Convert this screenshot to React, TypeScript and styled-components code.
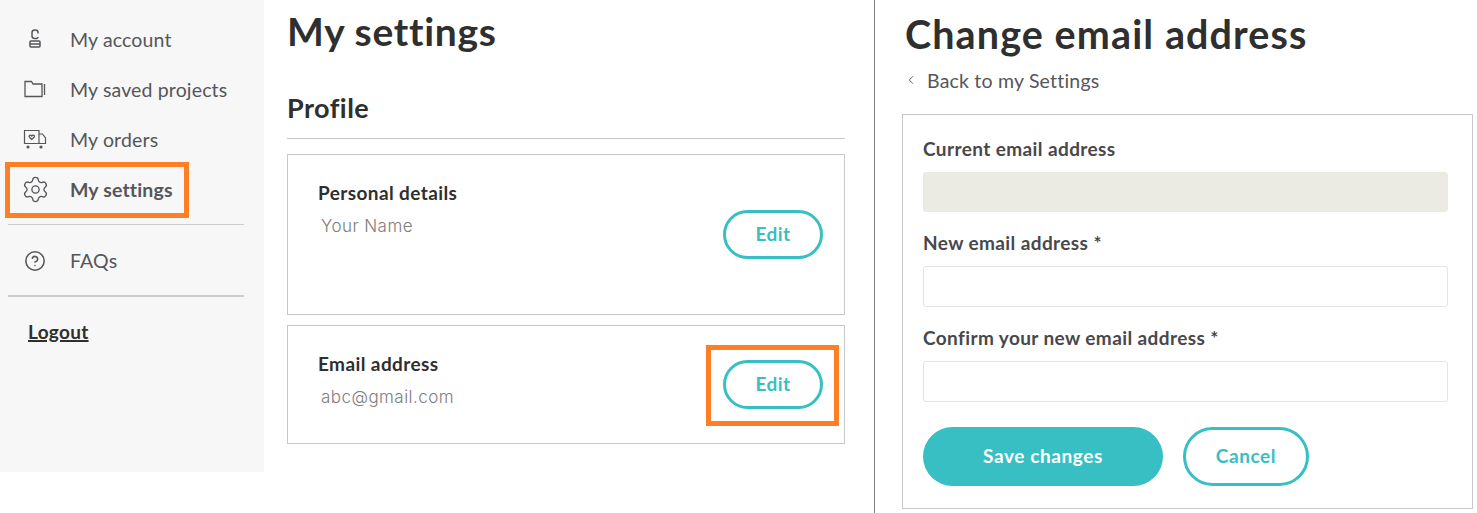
import React from "react";
import styled, { createGlobalStyle } from "styled-components";
import { ChevronLeft, Settings, CircleHelp } from "lucide-react";

const GlobalStyle = createGlobalStyle`
    html, body {
        margin: 0;
        padding: 0;
        background: #fff;
    }
    body {
        font-family: "Lato", "Open Sans", sans-serif;
        color: #2f2f2f;
    }
`;

const Page = styled.div`
    width: 1477px;
    height: 513px;
    display: flex;
    overflow: hidden;
`;

const Sidebar = styled.nav`
    width: 264px;
    height: 472px;
    flex: none;
    background: #f7f7f7;
    padding: 14px 20px 0 8px;
    box-sizing: border-box;
`;

const NavRow = styled.div<{ $bold?: boolean }>`
    height: 50px;
    display: flex;
    align-items: center;
    position: relative;
    color: #55565a;
    font-size: 19.5px;
    letter-spacing: 0.15px;
    font-weight: ${(p) => (p.$bold ? 700 : 400)};
`;

const NavIcon = styled.span`
    width: 62px;
    flex: none;
    display: flex;
    justify-content: center;
    padding-right: 8px;
    box-sizing: border-box;
    color: #55565a;
`;

const SideRule = styled.div<{ $thick?: boolean; $gap?: number }>`
    height: ${(p) => (p.$thick ? 2 : 1)}px;
    margin-top: ${(p) => p.$gap || 0}px;
    background: #cccccc;
`;

const FaqRow = styled(NavRow)`
    height: 70px;
    padding-top: 1px;
    box-sizing: border-box;
`;

const Logout = styled.a`
    display: block;
    margin: 23px 0 0 20px;
    font-size: 19px;
    letter-spacing: 0.3px;
    font-weight: 700;
    color: #2f2f2f;
    text-decoration: underline;
    text-decoration-thickness: 2px;
    line-height: 24px;
`;

const Callout = styled.div`
    position: absolute;
    border: 5px solid #ff7f27;
    box-sizing: border-box;
    pointer-events: none;
`;

const SettingsCallout = styled(Callout)`
    left: -3px;
    top: -2px;
    width: 184px;
    height: 56px;
`;

const EditCallout = styled(Callout)`
    right: 5px;
    top: 19px;
    width: 133px;
    height: 81px;
`;

const Main = styled.main`
    width: 558px;
    margin-left: 23px;
    flex: none;
`;

const Title = styled.h1`
    margin: 0;
    font-size: 39px;
    font-weight: 700;
    letter-spacing: 0.7px;
    line-height: 46px;
    padding-top: 8px;
    color: #2f2f2f;
`;

const SectionTitle = styled.h2`
    margin: 36px 0 0;
    padding-bottom: 13px;
    font-size: 27px;
    letter-spacing: 0.45px;
    font-weight: 700;
    line-height: 35px;
    border-bottom: 1px solid #c8c8c8;
    color: #2f2f2f;
`;

const Card = styled.section<{ $height: number; $top: number }>`
    position: relative;
    height: ${(p) => p.$height}px;
    margin-top: ${(p) => p.$top}px;
    border: 1px solid #c8c8c8;
    box-sizing: border-box;
    padding: 26px 21px 0 30px;
    display: flex;
    justify-content: space-between;
`;

const CardTitle = styled.div`
    font-size: 19px;
    letter-spacing: 0.4px;
    font-weight: 700;
    line-height: 24px;
    color: #2f2f2f;
`;

const CardValue = styled.div`
    margin: 10px 0 0 3px;
    font-family: "Inter", sans-serif;
    font-weight: 300;
    font-size: 17px;
    letter-spacing: 0.45px;
    line-height: 22px;
    color: #7d7d7d;
`;

const EditButton = styled.button<{ $offset: number }>`
    width: 100px;
    height: 49px;
    margin-top: ${(p) => p.$offset}px;
    border: 3px solid #38bfc3;
    border-radius: 25px;
    background: #fff;
    color: #38bfc3;
    font-family: inherit;
    font-size: 19px;
    letter-spacing: 0.4px;
    font-weight: 700;
    padding: 0 0 2px;
`;

const Divider = styled.div`
    width: 1px;
    height: 513px;
    background: #7f7f7f;
    margin-left: 29px;
    flex: none;
`;

const Right = styled.section`
    margin-left: 27px;
    width: 571px;
    flex: none;
`;

const BigTitle = styled.h1`
    margin: 0 0 0 3px;
    padding-top: 11px;
    font-size: 39.5px;
    letter-spacing: 1.1px;
    font-weight: 700;
    line-height: 46px;
    color: #2f2f2f;
`;

const BackLink = styled.a`
    display: flex;
    align-items: center;
    margin: 3px 0 0 2px;
    height: 40px;
    font-size: 19.5px;
    letter-spacing: 0.2px;
    color: #55565a;
    gap: 9px;
`;

const FormBox = styled.form`
    margin-top: 14px;
    height: 395px;
    border: 1px solid #c8c8c8;
    box-sizing: border-box;
    padding: 20px 24px 0 20px;
`;

const FieldLabel = styled.label`
    display: block;
    font-size: 19px;
    letter-spacing: 0.4px;
    font-weight: 700;
    line-height: 28px;
    color: #47484b;
`;

const Field = styled.div<{ $disabled?: boolean }>`
    height: ${(p) => (p.$disabled ? 40 : 41)}px;
    margin: 9px 0 17px;
    border: 1px solid ${(p) => (p.$disabled ? "#ebebe3" : "#e4e4e4")};
    border-radius: 3px;
    background: ${(p) => (p.$disabled ? "#ebebe3" : "#fff")};
    box-sizing: border-box;
`;

const Actions = styled.div`
    display: flex;
    gap: 20px;
    margin-top: 25px;
`;

const SaveButton = styled.button`
    width: 240px;
    height: 59px;
    border: 0;
    border-radius: 30px;
    background: #38bfc3;
    color: #fff;
    font-family: inherit;
    font-size: 19px;
    letter-spacing: 0.6px;
    font-weight: 700;
    padding: 0 0 2px;
`;

const CancelButton = styled.button`
    width: 126px;
    height: 59px;
    border: 3px solid #38bfc3;
    border-radius: 30px;
    background: #fff;
    color: #38bfc3;
    font-family: inherit;
    font-size: 19px;
    letter-spacing: 0.6px;
    font-weight: 700;
    padding: 0 0 2px;
`;

const AccountIcon = () => (
    <svg width="16" height="20" viewBox="0 0 16 20" fill="none" stroke="currentColor" strokeWidth="1.5">
        <path d="M11 4.5V3.5C11 2 9.8 1 8 1S5 2 5 3.5V7c0 1.5 1.2 2.5 3 2.5s3-.6 3-1.6" />
        <rect x="3" y="12" width="10" height="6" rx="1" />
        <path d="M3 15h10" />
    </svg>
);

const FolderIcon = () => (
    <svg width="22" height="18" viewBox="0 0 22 18" fill="none" stroke="currentColor" strokeWidth="1.3">
        <path d="M1 16.5V1.5h6.5l1.5 2.5h9v12.5z" />
        <path d="M20.5 4v11" />
    </svg>
);

const OrdersIcon = () => (
    <svg width="24" height="20" viewBox="0 0 24 20" fill="none" stroke="currentColor" strokeWidth="1.2">
        <path d="M16 14.5H1.5V1.5H16z" />
        <path d="M16 5h3.5l3 4v5.5H16" />
        <path d="M8.8 10.5L6.3 8c-1-1.4 1.2-2.6 2.5-1 1.3-1.6 3.5-.4 2.5 1z" />
        <circle cx="5" cy="18" r="1" fill="currentColor" />
        <circle cx="18" cy="18" r="1" fill="currentColor" />
    </svg>
);

function App() {
    return (
        <>
            <GlobalStyle />
            <Page>
                <Sidebar>
                    <NavRow>
                        <NavIcon><AccountIcon /></NavIcon>
                        My account
                    </NavRow>
                    <NavRow>
                        <NavIcon><FolderIcon /></NavIcon>
                        My saved projects
                    </NavRow>
                    <NavRow>
                        <NavIcon><OrdersIcon /></NavIcon>
                        My orders
                    </NavRow>
                    <NavRow $bold>
                        <SettingsCallout />
                        <NavIcon><Settings size={29} strokeWidth={1.1} /></NavIcon>
                        My settings
                    </NavRow>
                    <SideRule $gap={10} />
                    <FaqRow>
                        <NavIcon><CircleHelp size={22} strokeWidth={1.7} /></NavIcon>
                        FAQs
                    </FaqRow>
                    <SideRule $thick />
                    <Logout>Logout</Logout>
                </Sidebar>
                <Main>
                    <Title>My settings</Title>
                    <SectionTitle>Profile</SectionTitle>
                    <Card $height={161} $top={15}>
                        <div>
                            <CardTitle>Personal details</CardTitle>
                            <CardValue>Your Name</CardValue>
                        </div>
                        <EditButton $offset={29}>Edit</EditButton>
                    </Card>
                    <Card $height={119} $top={10}>
                        <div>
                            <CardTitle>Email address</CardTitle>
                            <CardValue>abc@gmail.com</CardValue>
                        </div>
                        <EditButton $offset={8}>Edit</EditButton>
                        <EditCallout />
                    </Card>
                </Main>
                <Divider />
                <Right>
                    <BigTitle>Change email address</BigTitle>
                    <BackLink>
                        <ChevronLeft size={14} strokeWidth={1.5} />
                        Back to my Settings
                    </BackLink>
                    <FormBox>
                        <FieldLabel>Current email address</FieldLabel>
                        <Field $disabled />
                        <FieldLabel>New email address *</FieldLabel>
                        <Field />
                        <FieldLabel>Confirm your new email address *</FieldLabel>
                        <Field />
                        <Actions>
                            <SaveButton type="button">Save changes</SaveButton>
                            <CancelButton type="button">Cancel</CancelButton>
                        </Actions>
                    </FormBox>
                </Right>
            </Page>
        </>
    );
}

export default App;
